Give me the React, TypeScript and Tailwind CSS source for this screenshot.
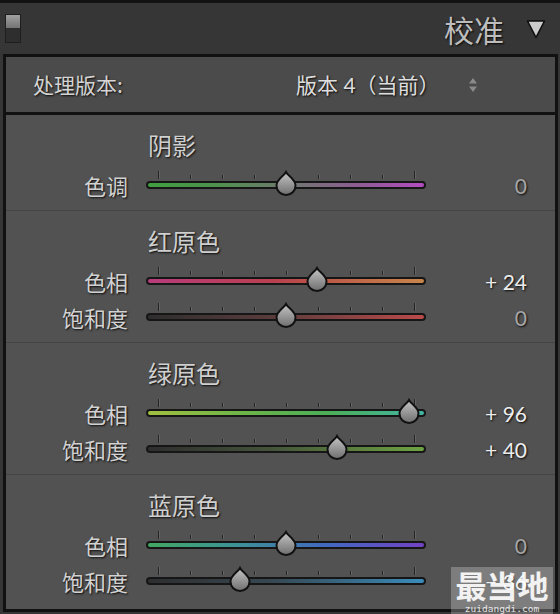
import React from 'react';

// ─── Data ────────────────────────────────────────────────────────────────────

type Row = { label: string; value: number; track: string };
type Section = { title: string; rows: Row[]; first?: boolean };

const SECTIONS: Section[] = [
  {
    title: '阴影',
    first: true,
    rows: [
      {
        label: '色调',
        value: 0,
        track: 'bg-[linear-gradient(90deg,#3f9f3f_0%,#4f914f_25%,#6e786e_50%,#8c5e90_75%,#b54bc2_100%)]',
      },
    ],
  },
  {
    title: '红原色',
    rows: [
      {
        label: '色相',
        value: 24,
        track: 'bg-[linear-gradient(90deg,#b83c7c_0%,#b8404f_45%,#bc5a48_65%,#c8854a_100%)]',
      },
      {
        label: '饱和度',
        value: 0,
        track: 'bg-[linear-gradient(90deg,#2e2e2e_0%,#5a3c3c_45%,#bb4a4a_100%)]',
      },
    ],
  },
  {
    title: '绿原色',
    rows: [
      {
        label: '色相',
        value: 96,
        track: 'bg-[linear-gradient(90deg,#a2c040_0%,#6cb448_35%,#4cae58_65%,#42b4a2_100%)]',
      },
      {
        label: '饱和度',
        value: 40,
        track: 'bg-[linear-gradient(90deg,#2e2e2e_0%,#44543a_45%,#6ea442_100%)]',
      },
    ],
  },
  {
    title: '蓝原色',
    rows: [
      {
        label: '色相',
        value: 0,
        track: 'bg-[linear-gradient(90deg,#42a862_0%,#3c9494_30%,#4268c0_65%,#7242c4_100%)]',
      },
      {
        label: '饱和度',
        value: -36,
        track: 'bg-[linear-gradient(90deg,#2e2e2e_0%,#364852_45%,#3a8cbc_100%)]',
      },
    ],
  },
];

const TICKS = [0, 1, 2, 3, 4, 5, 6, 7, 8];
const SHADOW = '[text-shadow:1px_1px_2px_rgba(0,0,0,0.9)]';
const CJK = "font-['Noto_Sans_CJK_SC',sans-serif]";
const NUM = "font-['Lato','Noto_Sans_CJK_SC',sans-serif]";

// ─── Pieces ──────────────────────────────────────────────────────────────────

function Thumb({ x }: { x: number }) {
  return (
    <svg className="absolute top-[3px]" style={{ left: x - 11 }} width="22" height="26" viewBox="0 0 22 26">
      <defs>
        <linearGradient id="thumbFill" x1="0" y1="0" x2="0" y2="1">
          <stop offset="0" stopColor="#c6c6c6" />
          <stop offset="1" stopColor="#6e6e6e" />
        </linearGradient>
      </defs>
      <path
        d="M11 2 C13 6 20.5 9 20.5 15.5 A9.5 9.5 0 0 1 1.5 15.5 C1.5 9 9 6 11 2 Z"
        fill="url(#thumbFill)"
        stroke="#111"
        strokeWidth="2"
      />
    </svg>
  );
}

function SliderRow({ row }: { row: Row }) {
  const pos = 140 + (row.value * 128) / 100;
  const text = row.value === 0 ? '0' : row.value > 0 ? `+ ${row.value}` : `− ${Math.abs(row.value)}`;

  return (
    <div className="flex h-[36px] items-center">
      <div className={`w-[122px] text-right text-[22px] leading-none text-[#d2d2d2] ${CJK} ${SHADOW}`}>{row.label}</div>

      <div className="relative ml-[18px] h-[36px] w-[280px]">
        {TICKS.map((i) => (
          <div
            key={i}
            className={`absolute w-px bg-[#242424] shadow-[1px_0_0_#646464] ${i === 0 || i === 8 ? 'top-[4px] h-[8px]' : 'top-[8px] h-[4px]'}`}
            style={{ left: 12 + i * 32 }}
          />
        ))}
        <div className={`absolute left-0 right-0 top-[14px] h-[8px] rounded-full border-2 border-[#161616] ${row.track}`} />
        <Thumb x={pos} />
      </div>

      <div
        className={`w-[101px] text-right text-[21px] leading-none ${NUM} ${SHADOW} ${row.value === 0 ? 'text-[#a6a6a6]' : 'text-[#ededed]'}`}
      >
        {text}
      </div>
    </div>
  );
}

// ─── Main Component ──────────────────────────────────────────────────────────

export default function App() {
  return (
    <div className="relative h-[614px] w-[560px] overflow-hidden border-t-[3px] border-[#121212] bg-[#363636]">
      {/* ─── Header ─────────────────────────────────────────────────────── */}
      <div className="flex h-[51px] items-center justify-between pl-[5px] pr-[14px]">
        <div className="flex h-[29px] w-[16px] flex-col border border-[#1e1e1e]">
          <div className="h-[13px] bg-[linear-gradient(180deg,#a0a0a0,#747474)]" />
          <div className="flex-1 bg-[#2e2e2e]" />
        </div>

        <div className="flex items-center gap-[22px]">
          <span className={`text-[30px] leading-none text-[#bdbdbd] ${CJK} ${SHADOW}`}>校准</span>
          <svg width="20" height="20" viewBox="0 0 20 20">
            <path d="M1.5 2 L18.5 2 L10 18.5 Z" fill="#cbcbcb" stroke="#0e0e0e" strokeWidth="1.6" strokeLinejoin="round" />
          </svg>
        </div>
      </div>

      {/* ─── Panel ──────────────────────────────────────────────────────── */}
      <div className="ml-[3px] h-[558px] w-[555px] border-[3px] border-[#111] bg-[#525252]">
        <div className="flex h-[58px] items-center border-b-[3px] border-[#111] bg-[#4b4b4b] pl-[27px]">
          <span className={`w-[263px] text-[21px] leading-none text-[#d4d4d4] ${CJK} ${SHADOW}`}>处理版本:</span>
          <span className={`text-[21px] leading-none text-[#dedede] ${CJK} ${SHADOW}`}>
            <span className={NUM}>版本 4</span>（当前）
          </span>
          <svg className="ml-[28px]" width="10" height="16" viewBox="0 0 10 16">
            <path d="M5 1 L9 6.5 L1 6.5 Z" fill="#8a8a8a" />
            <path d="M5 15 L9 9.5 L1 9.5 Z" fill="#8a8a8a" />
          </svg>
        </div>

        {SECTIONS.map((s) => (
          <div key={s.title} className={`pb-[7px] pt-[15px] ${s.first ? '' : 'border-t border-[#444]'}`}>
            <div className={`h-[30px] pl-[142px] text-[24px] leading-[30px] text-[#d0d0d0] ${CJK} ${SHADOW}`}>{s.title}</div>
            <div className="mt-[7px]">
              {s.rows.map((r) => (
                <SliderRow key={r.label} row={r} />
              ))}
            </div>
          </div>
        ))}
      </div>

      {/* ─── Watermark ──────────────────────────────────────────────────── */}
      <div className="absolute left-[451px] top-[564px] flex h-[50px] w-[102px] flex-col items-center bg-white/25">
        <span className={`whitespace-nowrap text-[31px] font-bold leading-[36px] text-white/90 ${CJK}`}>最当地</span>
        <span className="whitespace-nowrap font-['DejaVu_Sans_Mono',monospace] text-[9.5px] leading-[11px] text-white/85">
          zuidangdi.com
        </span>
      </div>
    </div>
  );
}
